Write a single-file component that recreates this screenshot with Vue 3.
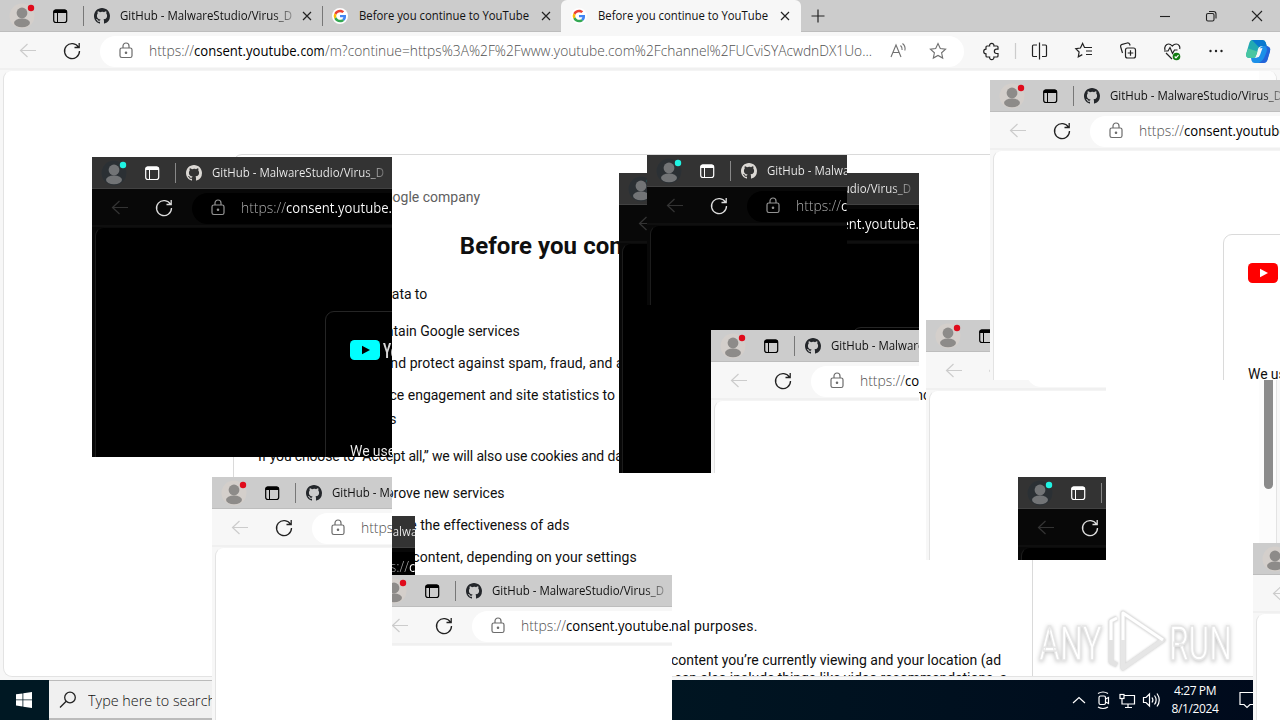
<script setup>
const layers = [
  { x: 0, y: 0, w: 1280, h: 720 },
  { x: 92, y: 157, w: 300, h: 300, dark: true },
  { x: 619, y: 173, w: 300, h: 300, dark: true },
  { x: 647, y: 155, w: 200, h: 150, dark: true },
  { x: 711, y: 330, w: 208, h: 143 },
  { x: 926, y: 320, w: 180, h: 240 },
  { x: 990, y: 80, w: 290, h: 300 },
  { x: 1018, y: 477, w: 88, h: 83, dark: true },
  { x: 215, y: 516, w: 200, h: 150, dark: true },
  { x: 372, y: 575, w: 300, h: 145 },
  { x: 212, y: 477, w: 180, h: 243 },
  { x: 1253, y: 543, w: 27, h: 177 }
]
const place = (l) => ({ left: l.x + 'px', top: l.y + 'px', width: l.w + 'px', height: l.h + 'px' })
const tabs = [
  { icon: 'github', title: 'GitHub - MalwareStudio/Virus_D', len: 172, fade: true },
  { icon: 'google', title: 'Before you continue to YouTube', len: 170 },
  { icon: 'google', title: 'Before you continue to YouTube', len: 170, active: true }
]
</script>

<template>
  <div class="desktop">
    <div v-for="(l, i) in layers" :key="i" class="shot" :class="{ dark: l.dark }" :style="place(l)">
      <div class="screen">
        <div class="tabbar">
          <svg class="lead" width="83" height="32" viewBox="0 0 83 32">
            <circle cx="22" cy="16" r="12.500" fill="#d4cfcb" />
            <circle cx="22" cy="13" r="5.400" fill="#8d8b89" />
            <ellipse cx="22" cy="22.800" rx="8" ry="4.400" fill="#8d8b89" />
            <circle cx="31" cy="8" r="3.200" fill="#e00b1c" />
            <rect x="53.700" y="10" width="13" height="12.500" rx="2.200" fill="none" stroke="#000" stroke-width="1.200" />
            <path d="M53.500 13v-1.200q0-2.200 2.200-2.200h9q2.200 0 2.200 2.200V13z" fill="#000" />
            <path d="M57.500 13v9.500" stroke="#000" />
          </svg>
          <div v-for="(t, k) in tabs" :key="k" class="tab" :class="{ active: t.active }">
            <svg v-if="t.icon === 'github'" class="fav git" width="16" height="16" viewBox="0 0 16 16">
              <path fill="#24272b" d="M8 0C3.58 0 0 3.58 0 8c0 3.54 2.29 6.53 5.47 7.59.4.07.55-.17.55-.38 0-.19-.01-.82-.01-1.49-2.01.37-2.53-.49-2.69-.94-.09-.23-.48-.94-.82-1.13-.28-.15-.68-.52-.01-.53.63-.01 1.08.58 1.23.82.72 1.21 1.87.87 2.33.66.07-.52.28-.87.51-1.07-1.78-.2-3.64-.89-3.64-3.95 0-.87.31-1.59.82-2.15-.08-.2-.36-1.02.08-2.12 0 0 .67-.21 2.2.82A7.4 7.4 0 0 1 8 3.86c.68 0 1.36.09 2 .27 1.53-1.04 2.2-.82 2.2-.82.44 1.1.16 1.92.08 2.12.51.56.82 1.27.82 2.15 0 3.07-1.87 3.75-3.65 3.95.29.25.54.73.54 1.48 0 1.07-.01 1.93-.01 2.2 0 .21.15.46.55.38A8.01 8.01 0 0 0 16 8c0-4.42-3.58-8-8-8z" />
            </svg>
            <svg v-else class="fav" width="16" height="16" viewBox="0 0 48 48">
              <circle cx="24" cy="24" r="24" fill="#fff" />
              <g transform="translate(5 5) scale(.79)">
                <path fill="#EA4335" d="M24 9.5c3.54 0 6.71 1.22 9.21 3.6l6.85-6.85C35.9 2.38 30.47 0 24 0 14.62 0 6.51 5.38 2.56 13.22l7.98 6.19C12.43 13.72 17.74 9.5 24 9.5z" />
                <path fill="#4285F4" d="M46.98 24.55c0-1.57-.15-3.09-.38-4.55H24v9.02h12.94c-.58 2.96-2.26 5.48-4.78 7.18l7.73 6c4.51-4.18 7.09-10.36 7.09-17.65z" />
                <path fill="#FBBC05" d="M10.53 28.59a14.5 14.5 0 0 1 0-9.18l-7.98-6.19a24 24 0 0 0 0 21.56l7.98-6.19z" />
                <path fill="#34A853" d="M24 48c6.48 0 11.93-2.13 15.89-5.81l-7.73-6c-2.15 1.45-4.92 2.3-8.16 2.3-6.26 0-11.57-4.22-13.47-9.91l-7.98 6.19C6.51 42.62 14.62 48 24 48z" />
              </g>
            </svg>
            <svg class="title" :class="{ fade: t.fade }" width="176" height="20">
              <text x="0" y="14" :textLength="t.len" lengthAdjust="spacingAndGlyphs">{{ t.title }}</text>
            </svg>
            <svg class="close" width="10" height="10" viewBox="0 0 10 10"><path d="M1 1l8 8M9 1L1 9" stroke="#222" stroke-width="1.200" /></svg>
          </div>
          <svg class="plus" width="14" height="14" viewBox="0 0 14 14"><path d="M7 .5v13M.5 7h13" stroke="#222" stroke-width="1.200" /></svg>
          <svg class="wins" width="104" height="14" viewBox="0 0 104 14" fill="none" stroke="#222" stroke-width="1.100">
            <path d="M0 7.500h10" />
            <rect x="46.500" y="4.500" width="7.500" height="7.500" rx="1.500" />
            <path d="M49 2.500h4.500q2.500 0 2.500 2.500v4.500" />
            <path d="M92 2l10 10M102 2L92 12" />
          </svg>
        </div>

        <div class="toolbar">
          <svg class="nav" width="100" height="38" viewBox="0 0 100 38" fill="none">
            <path d="M36 18.500H20.500M27.500 12l-7 6.500 7 6.500" stroke="#ccc" stroke-width="1.200" />
            <path d="M78.600 15.500A7.500 7.500 0 1 0 79.500 19M79.200 11v4.500h-4.700" stroke="#222" stroke-width="1.300" />
          </svg>
          <div class="address">
            <svg width="14" height="18" viewBox="0 0 14 18" fill="none" stroke="#6c6c6c" stroke-width="1.200">
              <rect x="1" y="6" width="12" height="9.500" rx="1.800" />
              <path d="M4 6V4a3 3 0 0 1 6 0v2" /><circle cx="7" cy="10.700" r=".7" fill="#555" />
            </svg>
            <svg class="url" width="726" height="24">
              <text x="0" y="17" textLength="45" lengthAdjust="spacingAndGlyphs">https://</text>
              <text x="45" y="17" textLength="106" lengthAdjust="spacingAndGlyphs" class="host">consent.youtube.</text>
              <text x="151.500" y="17" textLength="24" lengthAdjust="spacingAndGlyphs" class="host">com</text>
              <text x="176" y="17" textLength="547" lengthAdjust="spacingAndGlyphs">/m?continue=https%3A%2F%2Fwww.youtube.com%2Fchannel%2FUCviSYAcwdnDX1Uo...</text>
            </svg>
            <svg class="addr-tools" width="60" height="24" viewBox="0 0 60 24" fill="none" stroke="#707070" stroke-width="1.100">
              <path d="M1 18L6 6l5 12M3 13.500h6.200M10.500 6.500q2 1.800 1.600 4.500M12.500 4.500q3.300 2.700 2.400 7" />
              <path d="M48 4.500l2.300 5 5.300.6-4 3.700 1.100 5.300L48 16.500l-4.700 2.600 1.100-5.300-4-3.700 5.300-.6z" />
            </svg>
          </div>
          <svg class="tools" width="300" height="38" viewBox="980 0 300 38" fill="none" stroke="#222" stroke-width="1.200">
            <path d="M987 14h2.600a2.200 2.200 0 1 1 4.300 0h3.100q1 0 1 1v2.200h-1.500a2.100 2.100 0 1 0 0 4.300h1.500V24q0 1-1 1h-3.100a2.200 2.200 0 1 1-4.300 0H987q-1 0-1-1v-2.200a2.300 2.300 0 1 1 0-4.600V15q0-1 1-1z" />
            <path d="M1015.500 11v16" stroke="#ccc" />
            <path d="M1037 13h-3.500q-1 0-1 1v9.500q0 1 1 1h3.500M1039.500 10.500v17M1042 13h3.500q1 0 1 1v9.500q0 1-1 1H1042" />
            <path d="M1088 15.500h-3.500l-1.900-4-2.200 4.500-4.600.7 3.300 3.300-.8 4.800 4-2.200M1086 19h6M1086 22.500h6M1087 15.500h5" />
            <rect x="1125.500" y="16" width="10" height="10" rx="2" /><path d="M1130.500 18.200v5.600M1127.700 21h5.600M1122.500 21l-1.800-6q-.5-2 1.500-2.700l5-1.300q1.800-.3 2.500 1.300l.4 1.200" />
            <path d="M1165 18c-1-3 1-6 3.600-6 2 0 2.800 1 3.600 2 1-1 2-2 4-2 2.600 0 4.200 2.500 3.500 5M1164 19h4l2-3.500 2.500 6 2-3.500h3M1166 21l6 6" />
            <circle cx="1176.500" cy="24.500" r="3.800" fill="#107c10" stroke="none" /><path d="M1174.700 24.500l1.300 1.400 2.500-2.700" stroke="#fff" />
            <g fill="#222" stroke="none"><circle cx="1210.500" cy="19" r="1.200" /><circle cx="1216" cy="19" r="1.200" /><circle cx="1221.500" cy="19" r="1.200" /></g>
            <g stroke="none">
              <path d="M1252 8h10.500q2.500 0 3.200 2.500l1 3.500h-5.200q-2.500 0-3.300 2.500l-2 7q-.8 2.500-3.400 2.500h-3q-5 0-3.400-5l2.600-9q1-4 3-4z" fill="#22a9b2" />
              <path d="M1252 8h10.500q2.500 0 3.200 2.500l1 3.500h-5q-1.700 0-2.700 1.200z" fill="#0878cf" />
              <path d="M1246 22q0 4 4 4h3q2.500 0 3.300-2.500l1.200-4-9-3z" fill="#48c6a1" />
              <path d="M1264.800 14q7 0 5 5.500l-2.600 8.500q-1 3-4 3h-8.400q-2.600 0-3.300-2.500l-.5-2.500h3.500q2.500 0 3.300-2.500l2-7q.8-2.500 3.300-2.500z" fill="#1b8fe8" />
              <path d="M1264.500 14q3.500 1 2 6l-2 5q-2 4.500-6 6h5q3 0 4-3l2.500-8.500q1.500-5.500-5.500-5.500z" fill="#2463d8" />
              <path d="M1259.500 16.500l3-.5-2.500 7q-.8 2.500-3.300 2.500h-1.200z" fill="#f7f7f7" />
            </g>
          </svg>
        </div>

        <div class="viewport">
          <div class="page">
            <div class="card">
              <div class="brand">
                <svg width="90" height="20" viewBox="0 0 90 20">
                  <rect width="30" height="20" y="0" rx="4.500" fill="#f00" />
                  <path d="M12 5.700l8 4.300-8 4.300z" fill="#fff" />
                  <text class="word" x="33" y="17.500" textLength="52" lengthAdjust="spacingAndGlyphs">YouTube</text>
                </svg>
                <span>a Google company</span>
              </div>
              <h1>Before you continue to YouTube</h1>
              <p class="intro">We use cookies and data to</p>
              <ul>
                <li class="snug">Deliver and maintain Google services</li>
                <li>Track outages and protect against spam, fraud, and abuse</li>
                <li class="snug">Measure audience engagement and site statistics to understand how our services are used and enhance the quality<br>of those services</li>
              </ul>
              <p class="accept">If you choose to “Accept all,” we will also use cookies and data to</p>
              <ul>
                <li class="snug">Develop and improve new services</li>
                <li class="snug">Deliver and measure the effectiveness of ads</li>
                <li>Show personalized content, depending on your settings</li>
              </ul>
              <div class="tail">
                <p class="purposes">nal purposes.</p>
                <p>content you’re currently viewing and your location (ad</p>
                <p class="last">&nbsp;can also include things like video recommendations, a</p>
              </div>
            </div>
            <div class="rail"><div class="thumb"></div></div>
          </div>
          <svg class="mark" width="210" height="70" viewBox="1030 606 210 70">
            <g class="glyphs">
              <text x="1039" y="660" textLength="63" lengthAdjust="spacingAndGlyphs">ANY</text>
              <text x="1169" y="660" textLength="63" lengthAdjust="spacingAndGlyphs">RUN</text>
            </g>
            <g class="glow" fill="none" stroke-linejoin="round">
              <path d="M1123 613l40 27-40 28zM1117 618l-6 3v41l6 3" stroke="#e2e2e2" stroke-width="5" />
              <path d="M1123 640v28l40-28" stroke="#e6e6e6" stroke-width="4" />
              <path d="M1111 640v-19l6-3M1123 640v-27l40 27" stroke="#fff" stroke-width="3" />
            </g>
          </svg>
        </div>

        <div class="taskbar">
          <div class="start"><svg width="16" height="16" viewBox="0 0 16 16" fill="#fff"><path d="M0 2.300l6.500-.9v6.100H0zM7.300 1.300L16 0v7.500H7.300zM0 8.300h6.500v6.200L0 13.600zM7.300 8.300H16V16l-8.700-1.300z" /></svg></div>
          <div class="search">
            <svg width="18" height="18" viewBox="0 0 18 18" fill="none" stroke="#222" stroke-width="1.300"><circle cx="11" cy="6.500" r="5.300" /><path d="M7.200 10.200L1 16.500" /></svg>
            <svg width="140" height="26"><text x="0" y="19" textLength="128" lengthAdjust="spacingAndGlyphs">Type here to search</text></svg>
          </div>
          <div class="tray">
            <svg width="96" height="20" viewBox="1070 690 96 20" fill="none" stroke="#fff" stroke-width="1.200">
              <path d="M1073 703l6-5.500 6 5.500" />
              <rect x="1099" y="696" width="6.500" height="8.500" rx="1.500" /><path d="M1105.500 699l3-1.500v6l-3-1.500M1098 693.500q5-3 10 0M1098 707q5 3 10 0" />
              <path d="M1124 695.500h10.500v8.500H1122v-5M1128 704v3.500M1125 707.500h7" /><rect x="1120" y="694.500" width="4" height="4" />
              <path d="M1143.500 697.500h2.500l3.500-3.500v12l-3.500-3.500h-2.500zM1152 697.500q1.800 2.500 0 5M1154.500 695.500q3.300 4.500 0 9M1157 693.500q4.500 6.500 0 13" />
            </svg>
            <div class="clock"><span>4:27 PM</span><span>8/1/2024</span></div>
            <svg width="18" height="18" viewBox="0 0 18 18" fill="none" stroke="#fff" stroke-width="1.200"><path d="M1 1.500h16v12h-6l-3 3-3-3H1z" /></svg>
          </div>
        </div>
      </div>
    </div>
  </div>
</template>

<style>
body { margin: 0; overflow: hidden; }
</style>
<style scoped>
.desktop { position: relative; width: 1280px; height: 720px; overflow: hidden; font-family: "Open Sans", "Noto Sans", sans-serif; }
.shot { position: absolute; overflow: hidden; }
.dark { filter: invert(1); }
.screen { width: 1280px; height: 720px; display: flex; flex-direction: column; background: #f7f7f7; }
svg { display: block; flex: none; }
.tabbar { height: 32px; flex: none; display: flex; align-items: center; background: #ccc; box-shadow: inset 0 -1px #bdbdbd; }
.tab { width: 239px; height: 32px; box-sizing: border-box; display: flex; align-items: center; padding-left: 10px; position: relative; }
.tab:nth-of-type(-n+2)::before { content: ""; position: absolute; left: 0; top: 6px; width: 1px; height: 20px; background: #777; }
.tab.active { width: 240px; background: #f7f7f7; border-radius: 6px 6px 0 0; }
.fav { margin-right: 11px; }
.fav.git { margin-left: 1px; margin-right: 10px; }
.title { height: 20px; }
.title text { font-size: 12px; fill: #111; }
.title.fade { -webkit-mask-image: linear-gradient(90deg, #000 152px, rgba(0,0,0,.25) 174px); }
.close { margin-left: 6px; }
.plus { margin-left: 10px; }
.wins { margin-left: 335px; }
.toolbar { height: 38px; flex: none; display: flex; align-items: center; box-shadow: inset 0 -2px #f0f0f0; }
.address { width: 864px; height: 31px; margin-right: 16px; box-sizing: border-box; border-radius: 16px; background: #fff; display: flex; align-items: center; padding-left: 19px; }
.url { margin-left: 16px; }
.url text { font-size: 14px; font-weight: 300; fill: #505050; }
.url .host { fill: #000; font-weight: 400; }
.addr-tools { margin-left: 15px; }
.viewport { height: 610px; flex: none; padding: 0 3px 3px; box-sizing: border-box; position: relative; }
.page { box-sizing: border-box; height: 607px; border: 1px solid #e3e3e3; border-top-color: #f4f4f4; border-radius: 9px; background: #fff; overflow: hidden; padding-left: 229px; display: flex; justify-content: space-between; }
.card { box-sizing: border-box; width: 800px; height: 700px; flex: none; margin-top: 83px; border: 1px solid #dadada; border-radius: 9px; padding: 28px 0 0 24px; color: #0f0f0f; font: 14px/24px Roboto, sans-serif; }
.brand { display: flex; height: 20px; align-items: center; }
.brand span { color: #606060; margin-left: 16px; margin-top: 8px; white-space: nowrap; }
h1 { margin: 25px 24px 0 0; text-align: center; font-size: 24px; line-height: 36px; font-weight: 700; letter-spacing: .05px; }
.word { font: 700 20px "Liberation Sans Narrow", Roboto, sans-serif; fill: #282828; }
p { margin: 0; white-space: nowrap; }
.intro { margin-top: 18px; letter-spacing: -.08px; }
ul { margin: 13px 0 0; padding-left: 32px; white-space: nowrap; letter-spacing: .07px; }
li { padding-bottom: 8px; }
.snug { letter-spacing: 0; }
.accept { margin-top: 5px; letter-spacing: -.15px; }
.tail { margin: 37px 0 0 413px; }
.tail p { height: 24px; letter-spacing: -.01px; }
.tail .purposes { margin-bottom: 10px; letter-spacing: .2px; }
.tail .last { margin-top: -6px; letter-spacing: -.05px; }
.rail { width: 17px; background: #fcfcfc; }
.thumb { width: 9px; height: 399px; margin: 19px 0 0 5px; border-radius: 5px; background: #8b8b8b; }
.mark { position: absolute; left: 1030px; top: 536px; }
.glyphs text { font: 400 49px "Liberation Sans Narrow", "Roboto", sans-serif; fill: #fff; stroke: #e6e6e6; stroke-width: 1.500px; filter: drop-shadow(0 1px 2px rgba(0,0,0,.25)); }
.glow { filter: drop-shadow(0 0 1px rgba(0,0,0,.2)); }
.taskbar { height: 40px; flex: none; background: linear-gradient(90deg, #001823 40%, #000a1c); display: flex; }
.start { width: 48px; padding-right: 1px; box-sizing: content-box; display: flex; align-items: center; justify-content: center; }
.search { width: 193px; box-sizing: border-box; display: flex; align-items: center; gap: 11px; padding-left: 10px; background: #f0f0f0; border-top: 1px solid #bbb; border-bottom: 2px solid #bbb; overflow: hidden; }
.search text { font-size: 15px; font-weight: 300; fill: #111; }
.tray { margin-left: auto; display: flex; align-items: center; margin-right: 23px; color: #fff; }
.clock { width: 58px; display: flex; flex-direction: column; align-items: center; font-size: 12px; line-height: 18px; letter-spacing: -.4px; margin-right: 15px; }
</style>
